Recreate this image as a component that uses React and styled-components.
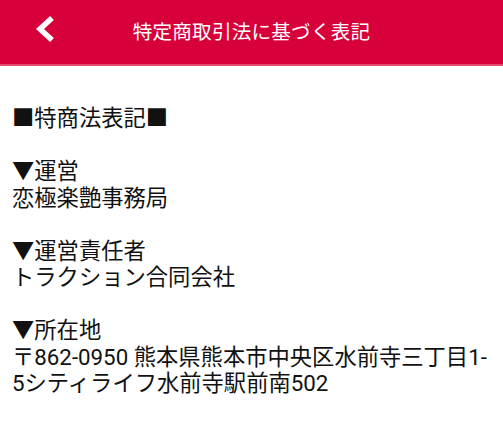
import React from "react";
import styled, { createGlobalStyle } from "styled-components";

const Global = createGlobalStyle`
  body {
    margin: 0;
    background: #fff;
    font-family: Roboto, "Noto Sans CJK JP", sans-serif;
  }
`;

const Header = styled.header`
  position: relative;
  display: flex;
  align-items: center;
  justify-content: center;
  height: 64px;
  background: #d7003a;
  border-bottom: 2px solid #e24a6e;
`;

const Back = styled.button`
  position: absolute;
  left: 30px;
  top: 15px;
  width: 30px;
  height: 30px;
  padding: 0;
  border: none;
  background: none;
  display: block;
`;

const Title = styled.h1`
  margin: 0 0 4px;
  color: #fff;
  font-size: 19.6px;
  font-weight: 400;
  letter-spacing: 0.2px;
`;

const Body = styled.main`
  padding: 39px 12px 0;
  font-size: 22.3px;
  line-height: 26.5px;
  color: #111;
`;

const Line = styled.div`
  white-space: nowrap;
  min-height: 26.5px;
`;

const lines = [
  "■特商法表記■",
  "",
  "▼運営",
  "恋極楽艶事務局",
  "",
  "▼運営責任者",
  "トラクション合同会社",
  "",
  "▼所在地",
  "〒862-0950 熊本県熊本市中央区水前寺三丁目1-",
  "5シティライフ水前寺駅前南502",
];

export default function App() {
  return (
    <>
      <Global />
      <Header>
        <Back aria-label="戻る">
          <svg width="30" height="30" viewBox="0 0 30 30">
            <polyline
              points="22,3 10,14 22,25"
              fill="none"
              stroke="#fff"
              strokeWidth="5.5"
              strokeLinejoin="miter"
            />
          </svg>
        </Back>
        <Title>特定商取引法に基づく表記</Title>
      </Header>
      <Body>
        {lines.map((t, i) => (
          <Line key={i}>{t}</Line>
        ))}
      </Body>
    </>
  );
}
